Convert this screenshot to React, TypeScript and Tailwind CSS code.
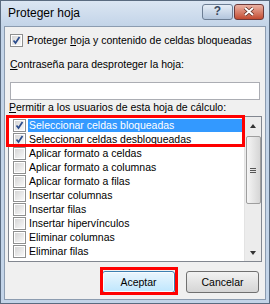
const items = [
    'Seleccionar celdas bloqueadas',
    'Seleccionar celdas desbloqueadas',
    'Aplicar formato a celdas',
    'Aplicar formato a columnas',
    'Aplicar formato a filas',
    'Insertar columnas',
    'Insertar filas',
    'Insertar hipervínculos',
    'Eliminar columnas',
    'Eliminar filas',
];

const CheckBox = ({ checked }: { checked: boolean }) => (
    <div className="w-[13px] h-[13px] border border-[#8e8f8f] bg-white p-[1px] shrink-0">
        <div className="w-full h-full bg-gradient-to-br from-[#d6d6d6] to-[#f8f8f8] flex items-center justify-center">
            {checked && (
                <svg width="9" height="9" viewBox="0 0 9 9">
                    <path d="M1.5 4.5 L3.5 7 L7.5 1" fill="none" stroke="#2b4c8c" strokeWidth="1.7" />
                </svg>
            )}
        </div>
    </div>
);

const App = () => {
    return (
        <div className="w-[270px] h-[304px] bg-[#c3d4e8] flex flex-col text-[10.5px] leading-[13px] text-black overflow-hidden border border-[#5a6b80]" style={{ fontFamily: '"Liberation Sans", Arial, sans-serif' }}>
            {/* Title bar */}
            <div className="h-[25px] flex items-center justify-between pl-[7px] pr-[5px] shrink-0 bg-gradient-to-b from-[#dbe6f3] to-[#c3d4e8]">
                <span className="text-[12px]">Proteger hoja</span>
                <div className="flex gap-[1px] -mt-[4px]">
                    <div className="w-[31px] h-[16px] rounded-[3px] border border-[#6d7e94] bg-gradient-to-b from-[#e6eef7] to-[#b3c5dc] flex items-center justify-center text-[12px] font-bold text-[#3a4a60]">?</div>
                    <div className="w-[30px] h-[16px] rounded-[3px] border border-[#6d3a3a] bg-gradient-to-b from-[#eab2a4] to-[#c24a30] flex items-center justify-center">
                        <svg width="12" height="9" viewBox="0 0 12 9">
                            <path d="M2 1 L10 8 M10 1 L2 8" stroke="#5a2a20" strokeWidth="3.4" />
                            <path d="M2 1 L10 8 M10 1 L2 8" stroke="#ffffff" strokeWidth="2" />
                        </svg>
                    </div>
                </div>
            </div>

            {/* Content */}
            <div className="flex-1 mx-[3px] mb-[3px] bg-[#f0f0f0] border border-[#8c9cb0] flex flex-col px-[3px] pt-[6px] relative whitespace-nowrap">
                <label className="flex items-center gap-[4px] h-[15px] ml-[2px]">
                    <CheckBox checked />
                    <span>Proteger <u>h</u>oja y contenido de celdas bloqueadas</span>
                </label>

                <div className="mt-[10px] ml-[2px]"><u>C</u>ontraseña para desproteger la hoja:</div>
                <div className="mt-[11px] h-[18px] mx-[2px] border border-[#abadb3] bg-white" />

                <div className="mt-[1px] ml-[1px]"><u>P</u>ermitir a los usuarios de esta hoja de cálculo:</div>

                <div className="mt-[2px] h-[146px] border border-[#828790] bg-white flex">
                    <div className="flex-1 flex flex-col pt-[1px] pl-[4px] min-w-0">
                        {items.map((it, i) => (
                            <div key={it} className="h-[14px] flex items-center gap-[2px]">
                                <CheckBox checked={i < 2} />
                                <span className={`flex-1 h-[13px] pl-[1px] ${i === 0 ? 'bg-[#3399ff] text-white' : ''}`}>{it}</span>
                            </div>
                        ))}
                    </div>
                    {/* Scrollbar */}
                    <div className="w-[17px] bg-[#ececec] border-l border-[#e3e3e3] flex flex-col items-center">
                        <div className="h-[17px] flex items-center justify-center">
                            <div className="w-0 h-0 border-l-[3.5px] border-r-[3.5px] border-b-[4px] border-l-transparent border-r-transparent border-b-[#333]" />
                        </div>
                        <div className="w-[15px] h-[68px] mt-[2px] rounded-[2px] border border-[#9e9e9e] bg-gradient-to-r from-[#f5f5f5] to-[#d6d6d6] flex flex-col items-center justify-center gap-[1px]">
                            <div className="w-[6px] h-[1px] bg-[#555]" />
                            <div className="w-[6px] h-[1px] bg-[#555]" />
                            <div className="w-[6px] h-[1px] bg-[#555]" />
                        </div>
                        <div className="flex-1" />
                        <div className="h-[17px] flex items-center justify-center">
                            <div className="w-0 h-0 border-l-[3.5px] border-r-[3.5px] border-t-[4px] border-l-transparent border-r-transparent border-t-[#333]" />
                        </div>
                    </div>
                </div>

                <div className="flex justify-end gap-[11px] mt-[9px] pr-[3px]">
                    <button className="w-[73px] h-[22px] rounded-[3px] border border-[#3c7fb1] bg-gradient-to-b from-[#eaf6fd] to-[#bee6fd] shadow-[inset_0_0_0_1px_#f8fcff]">Aceptar</button>
                    <button className="w-[73px] h-[22px] rounded-[3px] border border-[#707070] bg-gradient-to-b from-[#f2f2f2] to-[#d5d5d5]">Cancelar</button>
                </div>

                {/* Annotation boxes */}
                <div className="absolute left-[1px] top-[88px] w-[239px] h-[32px] border-[3px] border-[#ff0000] pointer-events-none" />
                <div className="absolute left-[95px] top-[240px] w-[78px] h-[28px] border-[3px] border-[#ff0000] pointer-events-none" />
            </div>
        </div>
    );
};

export default App;
